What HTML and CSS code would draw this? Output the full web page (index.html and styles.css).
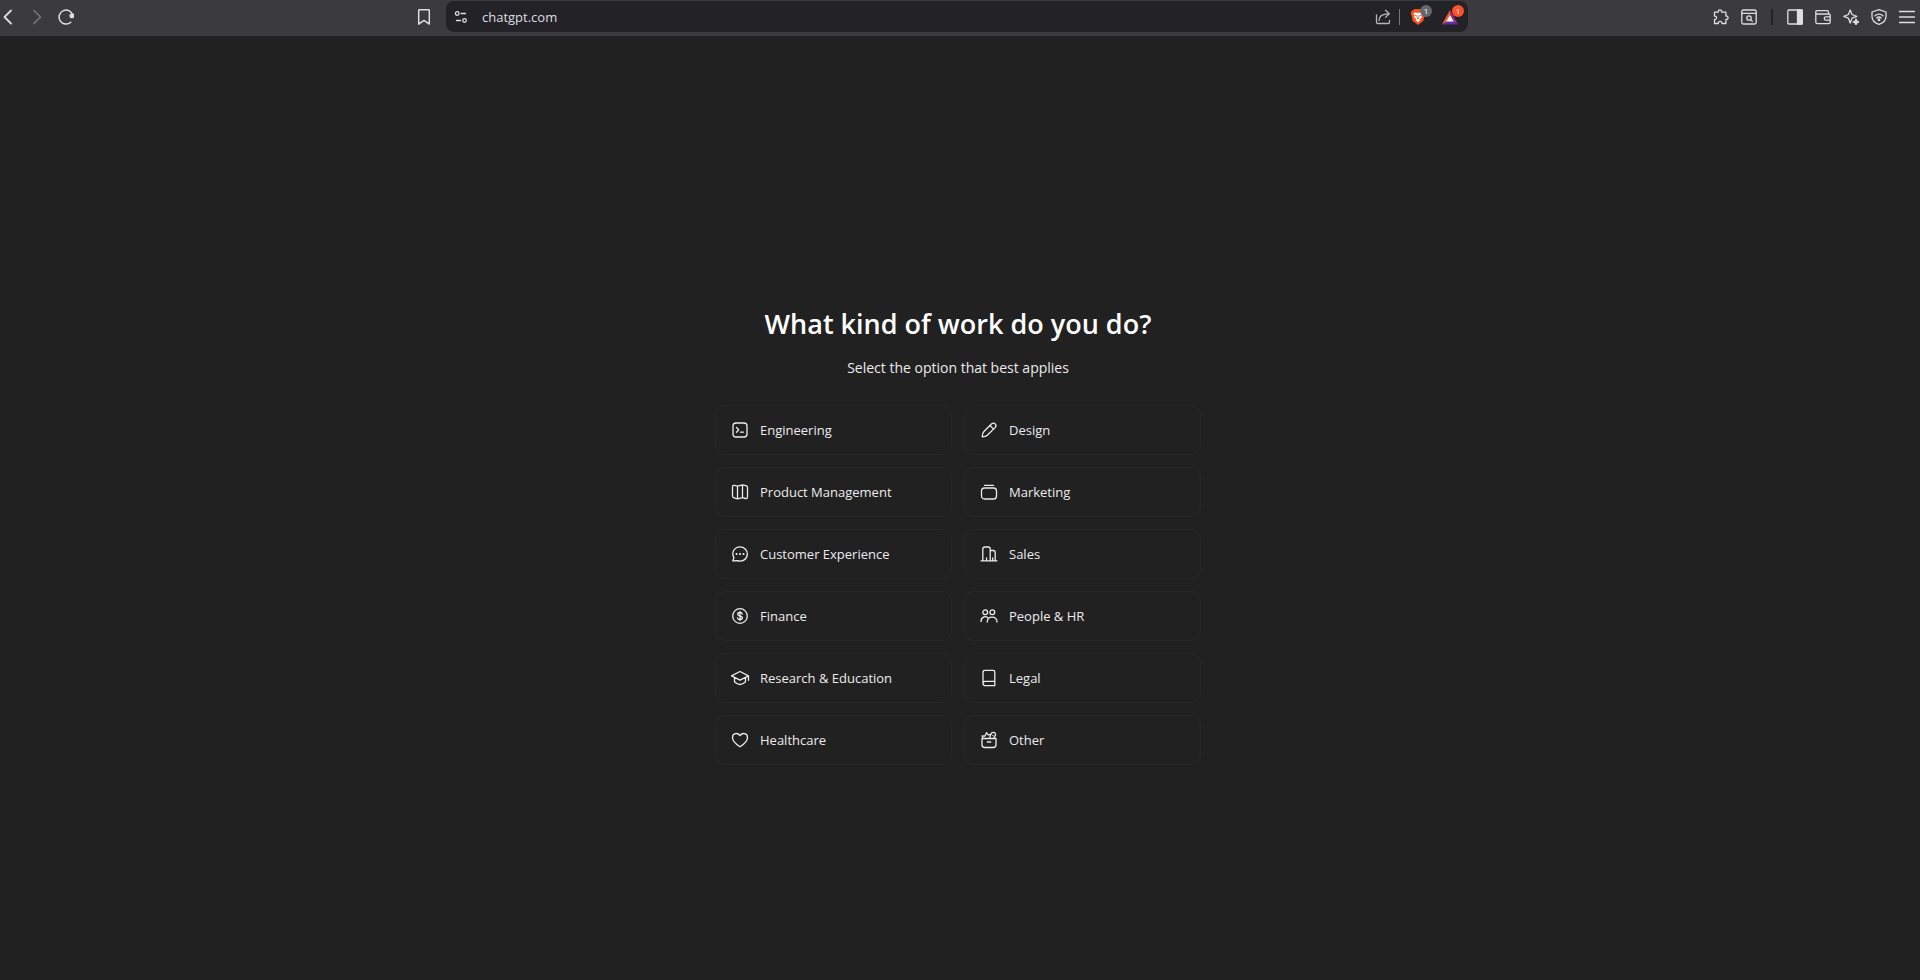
FILE: index.html
```html
<!DOCTYPE html>
<html lang="en">
<head>
<meta charset="utf-8">
<meta name="viewport" content="width=device-width, initial-scale=1">
<title>chatgpt.com</title>
<link rel="stylesheet" href="styles.css">
</head>
<body>
<header class="toolbar">
  <nav class="nav-group" aria-label="Navigation">
    <button class="tool" aria-label="Back"><svg viewBox="0 0 16 16"><path d="M11 1.500 4.500 8l6.500 6.500" stroke-width="1.800"/></svg></button>
    <button class="tool tool-dim" aria-label="Forward"><svg viewBox="0 0 16 16"><path d="M5 1.500 11.500 8 5 14.500" stroke-width="1.600"/></svg></button>
    <button class="tool" aria-label="Reload"><svg viewBox="0 0 16 16"><path d="M12.800 13.200A7 7 0 1 1 14.900 6.500" stroke-width="1.500"/><circle cx="14" cy="6.800" r="1.900" class="solid"/></svg></button>
    <button class="tool tool-bookmark" aria-label="Bookmark"><svg viewBox="0 0 16 16"><path d="M2.700 1.500q0-.8.800-.8h9q.8 0 .8.800v13.600L8 11.400l-5.300 3.700z" stroke-width="1.500"/></svg></button>
  </nav>
  <div class="address">
    <button class="tool" aria-label="Site settings"><svg viewBox="0 0 16 16"><circle cx="3.200" cy="4.500" r="1.800"/><path d="M7 4.500h4.500M2.500 11.500h4"/><circle cx="10.500" cy="11.500" r="1.800"/></svg></button>
    <input class="address-input" type="text" value="chatgpt.com" aria-label="Address">
    <button class="tool tool-soft" aria-label="Share"><svg viewBox="0 0 16 16"><path d="M1.500 6v7.200q0 1.300 1.300 1.300h10.400q1.300 0 1.300-1.300v-1.700M4 11.500C4 7 6.500 4.800 13.500 4.800M10.500 1.200 14.300 4.800 10.500 8.400"/></svg></button>
    <span class="rule"></span>
    <button class="tool tool-badged" aria-label="Shields"><svg viewBox="0 0 16 16"><path d="M4.500 0h7L13.300 1.500l1 .2 1 2.500-.6 1.500L13.300 12 8 16l-5.300-4L1.300 5.700.7 4.200l1-2.500 1-.2z" fill="#f4511e"/><path d="M3.300 4 6 3.500l2 .6 2-.6 2.700.5-1.200 3 .4 1.400-2.200 1.500L10.500 11 8 13.200 5.500 11l.8-1.100-2.200-1.500.4-1.400z" fill="#fff"/><path d="M5 6.300l1.700.7M11 6.300l-1.700.7M8 6.800v2.500l-1 .6M8 9.300l1 .6" stroke="#f4511e" stroke-width=".9"/></svg><span class="badge">1</span></button>
    <button class="tool tool-badged" aria-label="Rewards"><svg viewBox="0 0 16 16"><path d="M8 1 0 15.500l8-4.500z" fill="#ff5a28"/><path d="M8 1 16 15.500l-8-4.500z" fill="#a02f82"/><path d="M0 15.500h16l-8-4.700z" fill="#5c2eaa"/><path d="M8 6.300 4.300 12.500h7.400z" fill="#fff"/></svg><span class="badge badge-hot">1</span></button>
  </div>
  <div class="tool-group">
    <button class="tool" aria-label="Extensions"><svg viewBox="0 0 16 16"><path d="M1.500 3.200h3.800c-.7-3 4-3 3.400 0h4.200v3.900c2.900-.7 2.900 4 0 3.300v4.100H9c.5-2.900-4.200-2.900-3.700 0H1.500v-4c2.700.5 2.700-3.900 0-3.400z"/></svg></button>
    <button class="tool" aria-label="Search tabs"><svg viewBox="0 0 16 16"><rect x=".8" y="1" width="14.400" height="14" rx="1.500"/><path d="M1 4.300h14M9.600 10.600l1.700 1.800"/><circle cx="8" cy="9" r="2.200"/></svg></button>
    <span class="rule rule-dark"></span>
    <button class="tool" aria-label="Side panel"><svg viewBox="0 0 16 16"><rect x=".8" y="1" width="14.400" height="14" rx="1"/><path d="M10.500 1h4.700v14h-4.700z" class="solid"/></svg></button>
    <button class="tool" aria-label="Wallet"><svg viewBox="0 0 16 16"><path d="M13.500 5V3q0-1.300-1.300-1.300H2Q.8 1.700.8 3v10q0 1.700 1.700 1.700h11q1.700 0 1.700-1.700V6.300q0-1.300-1.300-1.300H1M15 7.800h-4q-1.700 0-1.700 1.700T11 11.200h4"/></svg></button>
    <button class="tool" aria-label="Assistant"><svg viewBox="0 0 16 16"><path d="M7.200 1 9 5.500 13.800 7.300 9 9.200 7.200 14 5.400 9.200.8 7.300l4.600-1.800z"/><path d="m13 10 .8 2.200 2.200.8-2.200.8L13 16l-.8-2.200L10 13l2.200-.8z" class="solid"/></svg></button>
    <button class="tool" aria-label="VPN"><svg viewBox="0 0 16 16"><path d="M8 .7 15 3v4.500c0 4-3 6.500-7 7.900-4-1.400-7-3.900-7-7.900V3z"/><path d="M4 6.800q4-3.300 8 0M5.700 8.900q2.300-1.800 4.600 0"/><circle cx="8" cy="10.700" r=".8" class="solid"/></svg></button>
    <button class="tool" aria-label="Menu"><svg viewBox="0 0 16 16"><path d="M.5 2.500h15M.5 8h15M.5 13.500h15"/></svg></button>
  </div>
</header>

<main class="page">
  <h1 class="title">What kind of work do you do?</h1>
  <p class="subtitle">Select the option that best applies</p>
  <div class="options">
    <button class="option"><svg viewBox="0 0 20 20"><rect x="3" y="3" width="14" height="14" rx="3"/><path d="m6.500 7.500 2.200 2.300-2.200 2.400M10.500 12.200h3"/></svg>Engineering</button>
    <button class="option"><svg viewBox="0 0 20 20"><path d="M3.200 16.800c.1-2 .4-4 1.500-5.100l7.700-7.700c2.800-2.400 6 .9 3.700 3.600l-7.800 7.700c-1.100 1.100-3.100 1.400-5.100 1.500zM11 5.500l3.600 3.600"/></svg>Design</button>
    <button class="option"><svg viewBox="0 0 20 20"><path d="M2.500 5q0-2 2-1.600l3 .8 5-1.300 3.500.8q1.500.4 1.500 1.800V15q0 1.800-1.800 1.500l-3.200-.9-5 1.200-3.500-1q-1.500-.4-1.500-1.800zM7.500 4.200v12.500M12.500 3v12.500"/></svg>Product Management</button>
    <button class="option"><svg viewBox="0 0 20 20"><path d="M5.500 3.300h9"/><rect x="2.500" y="6" width="15" height="11" rx="3"/></svg>Marketing</button>
    <button class="option"><svg viewBox="0 0 20 20"><path d="M2.800 16.800 4 13.600C.8 8.500 4.600 2.800 10 2.800c4.200 0 7.300 3.300 7.300 7.100 0 5.300-5.100 8.300-9.500 6.700z"/><path d="M6.500 9.900h.1M10 9.900h.1M13.500 9.900h.1" stroke-width="2"/></svg>Customer Experience</button>
    <button class="option"><svg viewBox="0 0 20 20"><path d="M2 16.800h16M3.800 16.800V5q0-2 2-2h3.400q2 0 2 2v11.800M11.200 6.500h3q2 0 2 2v8.300M7.500 16.500V14M13.700 16.500V14"/></svg>Sales</button>
    <button class="option"><svg viewBox="0 0 20 20"><circle cx="10" cy="10" r="7.300"/><path d="M12.300 8.100c-.3-1.100-1.200-1.600-2.300-1.600-1.300 0-2.300.6-2.300 1.700 0 2.500 4.700 1.100 4.700 3.600 0 1.100-1 1.800-2.400 1.800-1.200 0-2.200-.6-2.500-1.700M10 5.400v9.200"/></svg>Finance</button>
    <button class="option"><svg viewBox="0 0 20 20"><circle cx="6.200" cy="6.300" r="2.400"/><circle cx="13.300" cy="6.300" r="2.400"/><path d="M2 15.500c.1-5.200 5.500-6.200 7.400-3M8.200 16c.2-6.600 9.600-6.600 9.800 0"/></svg>People &amp; HR</button>
    <button class="option"><svg viewBox="0 0 20 20"><path d="M10 3.500 1.500 7.800l8.500 4.400 8.500-4.400zM18.500 7.800v4.500M4.500 9.500v4.300q5.500 5.500 11 0V9.500"/></svg>Research &amp; Education</button>
    <button class="option"><svg viewBox="0 0 20 20"><path d="M4 15.500V4.300q0-2 2-2h8q1.800 0 1.800 1.800v13.600H6q-2 0-2-2.100 0-2.200 2-2.200h9.800"/></svg>Legal</button>
    <button class="option"><svg viewBox="0 0 20 20"><path d="M10 16.800C6 14.200 2.500 11.300 2.500 7.500c0-4.200 5-5.400 7.500-2 2.500-3.400 7.500-2.200 7.500 2 0 3.800-3.500 6.700-7.500 9.300z"/></svg>Healthcare</button>
    <button class="option"><svg viewBox="0 0 20 20"><path d="M3 8.500h14v6.300q0 2.700-2.700 2.700H5.700Q3 17.500 3 14.800zM8.300 12h3.400M3.800 8.300l-.6-2.500 2.800.3L7.500 2.700l1.700 2.200 2.300-.6-.8 4M12 4.500c.2-3 5-2.800 4.500.6-.2 1.300-1.500 1.500-1.600 3.200M14 5.300v.2"/></svg>Other</button>
  </div>
</main>
</body>
</html>
```
FILE: styles.css
```css
* {
  box-sizing: border-box;
}

body {
  margin: 0;
  min-height: 100vh;
  background: #212121;
  color: #fff;
  font-family: "Open Sans", "Noto Sans", sans-serif;
}

button {
  border: 0;
  background: none;
  color: inherit;
  font: inherit;
  cursor: pointer;
}

svg {
  display: block;
  fill: none;
  stroke: currentColor;
  stroke-linecap: round;
  stroke-linejoin: round;
}

.solid {
  fill: currentColor;
}

.toolbar {
  display: grid;
  grid-template-columns: 446fr 1022fr 452fr;
  height: 36px;
  padding: 1px 0 4px;
  background: #3b3b3f;
  color: #dedee2;
}

.nav-group,
.tool-group,
.address {
  display: flex;
  align-items: center;
}

.nav-group {
  gap: 13px;
  padding-right: 14px;
}

.tool-group {
  justify-content: flex-end;
  gap: 12px;
  padding-right: 5px;
}

.tool {
  flex: none;
  padding: 0;
}

.tool svg {
  width: 16px;
  height: 16px;
  stroke-width: 1.3;
}

.tool-dim {
  color: #77777b;
}

.tool-soft {
  color: #b4b4b9;
}

.tool-bookmark {
  margin-left: auto;
}

.address {
  gap: 12px;
  padding: 0 6px 0 8px;
  border-radius: 8px;
  background: #232327;
}

.address-input {
  flex: 1;
  min-width: 0;
  padding: 0;
  border: 0;
  outline: 0;
  background: none;
  color: #dedee2;
  font: 13px/20px "Open Sans", "Noto Sans", sans-serif;
}

.rule {
  width: 1px;
  height: 16px;
  margin: 0 -2px 0 -4px;
  background: #77777b;
}

.rule-dark {
  width: 2px;
  margin: 0 2px;
  background: #242428;
}

.tool-badged {
  position: relative;
  margin-right: 4px;
}

.tool-badged svg {
  stroke: none;
}

.badge {
  position: absolute;
  top: -4px;
  right: -6px;
  width: 12px;
  height: 12px;
  border-radius: 50%;
  background: #65676f;
  color: #fff;
  font-size: 8px;
  line-height: 12px;
}

.badge-hot {
  background: #ff4f2b;
}

.page {
  display: flex;
  flex-direction: column;
  align-items: center;
  padding: 268px 20px 40px 16px;
}

.title {
  margin: 0;
  font-size: 27px;
  font-weight: 600;
  line-height: 40px;
}

.subtitle {
  margin: 12px 0 25px;
  color: #ececec;
  font-size: 14px;
  line-height: 24px;
}

.options {
  display: grid;
  grid-template-columns: 1fr 1fr;
  gap: 12px;
  width: 100%;
  max-width: 486px;
}

.option {
  display: flex;
  align-items: center;
  gap: 10px;
  height: 50px;
  padding: 0 14px;
  border: 1px solid #282828;
  border-radius: 10px;
  color: #ececec;
  font-size: 13px;
  line-height: 20px;
  text-align: left;
}

.option svg {
  flex: none;
  width: 20px;
  height: 20px;
  stroke-width: 1.3;
}
```
